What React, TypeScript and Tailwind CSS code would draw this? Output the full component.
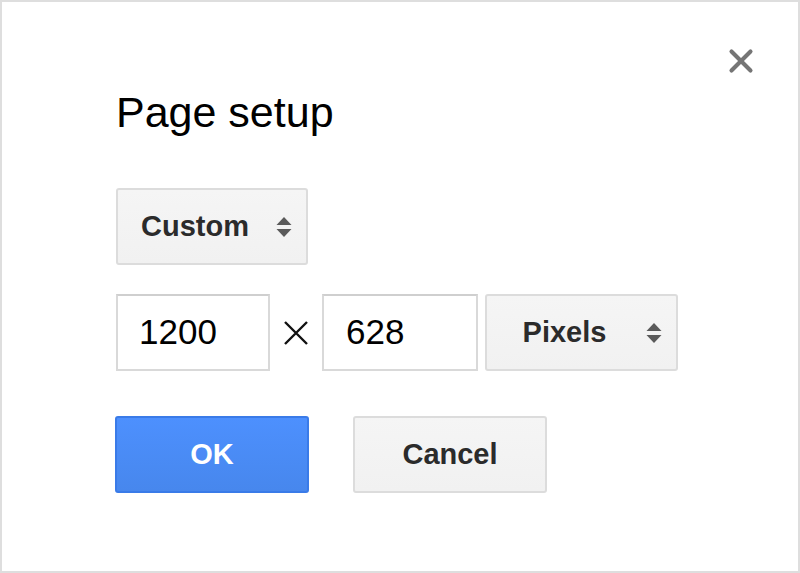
import { X } from "lucide-react";

const SortArrows = () => (
  <svg width="16" height="22" viewBox="0 0 16 22" className="shrink-0">
    <path d="M8 1 L15.5 9 L0.5 9 Z" fill="#5a5a5a" />
    <path d="M0.5 13 L15.5 13 L8 21 Z" fill="#5a5a5a" />
  </svg>
);

const SelectBox = ({ label, width }: { label: string; width: string }) => (
  <button
    className={`${width} h-[77px] flex items-center gap-[4px] pr-[14px] rounded-[3px] border-2 border-[#dcdcdc] bg-gradient-to-b from-[#f5f5f5] to-[#f1f1f1] text-[29px] font-bold text-[#2b2b2b]`}>
    <span className="flex-1 text-center">{label}</span>
    <SortArrows />
  </button>
);

const App = () => {
  return (
    <div className="relative w-[800px] h-[573px] border-2 border-[#dedede] bg-white font-['Liberation_Sans',Arial,sans-serif]">
      <button className="absolute right-[38px] top-[40px] text-[#757575]">
        <X size={38} strokeWidth={2.6} />
      </button>
      <div className="pl-[114px] pt-[89px] flex flex-col">
        <h1 className="text-[43px] leading-none text-black">Page setup</h1>

        <div className="mt-[54px]">
          <SelectBox label="Custom" width="w-[192px]" />
        </div>

        <div className="mt-[29px] flex items-center">
          <div className="w-[154px] h-[77px] border-2 border-[#d9d9d9] border-t-[#cfcfcf] flex items-center pl-[21px] text-[35px] text-black">
            1200
          </div>
          <div className="w-[52px] flex items-center justify-center">
            <svg width="26" height="26" viewBox="0 0 26 26">
              <path d="M2 2 L24 24 M24 2 L2 24" stroke="#111" strokeWidth="2.4" />
            </svg>
          </div>
          <div className="w-[156px] h-[77px] border-2 border-[#d9d9d9] border-t-[#cfcfcf] flex items-center pl-[22px] text-[35px] text-black">
            628
          </div>
          <div className="ml-[7px]">
            <SelectBox label="Pixels" width="w-[193px]" />
          </div>
        </div>

        <div className="mt-[45px] flex gap-[44px]">
          <button className="w-[194px] h-[77px] -ml-px rounded-[3px] border-2 border-[#3a7be8] bg-gradient-to-b from-[#4d90fe] to-[#4787ed] text-white text-[29px] font-bold">
            OK
          </button>
          <button className="w-[194px] h-[77px] rounded-[3px] border-2 border-[#dcdcdc] bg-gradient-to-b from-[#f5f5f5] to-[#f1f1f1] text-[#2b2b2b] text-[29px] font-bold">
            Cancel
          </button>
        </div>
      </div>
    </div>
  );
};

export default App;
